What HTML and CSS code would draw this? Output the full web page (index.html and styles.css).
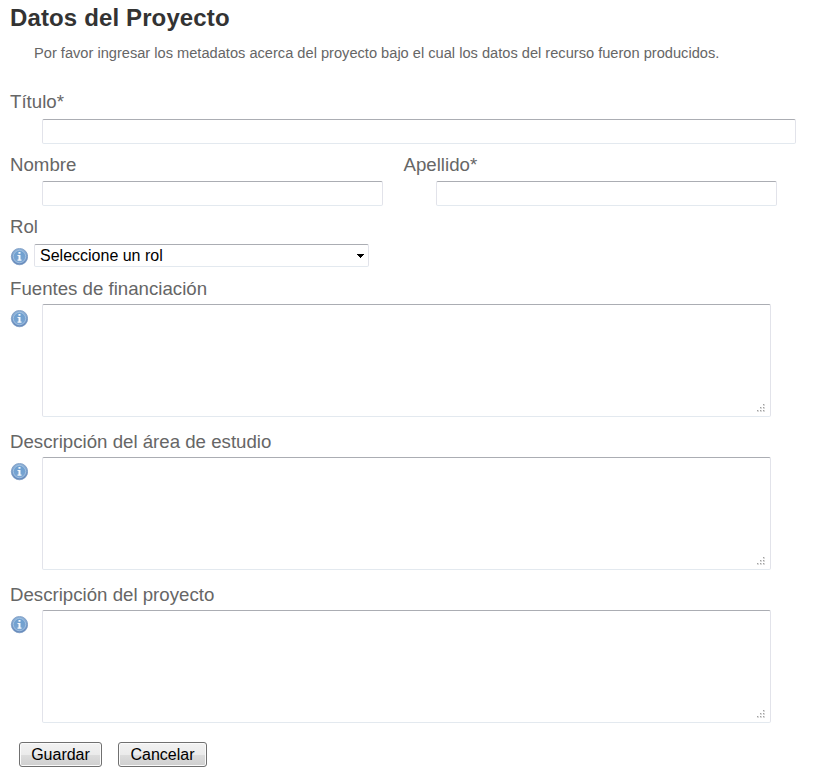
FILE: index.html
```
<!DOCTYPE html>
<html lang="es">
<head>
<meta charset="utf-8">
<title>Datos del Proyecto</title>
<link rel="stylesheet" href="styles.css">
</head>
<body>
<svg class="defs" width="0" height="0" aria-hidden="true">
  <defs>
    <linearGradient id="rim" x1="0" y1="0" x2="0" y2="1"><stop offset="0" stop-color="#8fb3d8"/><stop offset="1" stop-color="#6488bb"/></linearGradient>
    <linearGradient id="disc" x1="0" y1="0" x2="0" y2="1"><stop offset="0" stop-color="#6c9fd0"/><stop offset="1" stop-color="#7ba5d2"/></linearGradient>
  </defs>
  <symbol id="info" viewBox="0 0 18 18">
    <circle cx="9.5" cy="8.6" r="8.2" fill="url(#rim)" stroke="#7192bd" stroke-width=".7"/>
    <circle cx="9.5" cy="8.6" r="6.2" fill="url(#disc)" stroke="#a5c3e2" stroke-width=".9"/>
    <path d="M8.5 4h2v1.8h-2zM7.5 7h3v4.6h1v1.1h-4v-1.1h1V8.1h-1z" fill="#f4f8fc"/>
  </symbol>
  <symbol id="grip" viewBox="0 0 8 8">
    <path d="M6 0h2v2H6zM3 3h2v2H3zM6 3h2v2H6zM0 6h2v2H0zM3 6h2v2H3zM6 6h2v2H6z" fill="#dadada"/>
    <path d="M6 0h1v1H6zM3 3h1v1H3zM6 3h1v1H6zM0 6h1v1H0zM3 6h1v1H3zM6 6h1v1H6z" fill="#a0a0a0"/>
  </symbol>
</svg>
<form class="project">
  <h1 class="title">Datos del Proyecto</h1>
  <p class="intro">Por favor ingresar los metadatos acerca del proyecto bajo el cual los datos del recurso fueron producidos.</p>

  <div class="field">
    <label class="label" for="titulo">Título*</label>
    <input class="control text wide" id="titulo" type="text">
  </div>

  <div class="names">
    <div class="field">
      <label class="label" for="nombre">Nombre</label>
      <input class="control text" id="nombre" type="text">
    </div>
    <div class="field">
      <label class="label" for="apellido">Apellido*</label>
      <input class="control text" id="apellido" type="text">
    </div>
  </div>

  <div class="field role">
    <label class="label">Rol</label>
    <div class="row">
      <svg class="info"><use href="#info"/></svg>
      <div class="control select" role="combobox" tabindex="0"><span class="value">Seleccione un rol</span><svg class="arrow" viewBox="0 0 7 4" shape-rendering="crispEdges"><path d="M0 0h7v1H6v1H5v1H4v1H3V3H2V2H1V1H0z"/></svg></div>
    </div>
  </div>

  <div class="field area">
    <label class="label" for="fuentes">Fuentes de financiación</label>
    <div class="row">
      <svg class="info"><use href="#info"/></svg>
      <div class="box"><textarea class="control" id="fuentes"></textarea><svg class="grip"><use href="#grip"/></svg></div>
    </div>
  </div>

  <div class="field area">
    <label class="label" for="estudio">Descripción del área de estudio</label>
    <div class="row">
      <svg class="info"><use href="#info"/></svg>
      <div class="box"><textarea class="control" id="estudio"></textarea><svg class="grip"><use href="#grip"/></svg></div>
    </div>
  </div>

  <div class="field area">
    <label class="label" for="descripcion">Descripción del proyecto</label>
    <div class="row">
      <svg class="info"><use href="#info"/></svg>
      <div class="box"><textarea class="control" id="descripcion"></textarea><svg class="grip"><use href="#grip"/></svg></div>
    </div>
  </div>

  <div class="actions">
    <button class="button save" type="button">Guardar</button>
    <button class="button cancel" type="button">Cancelar</button>
  </div>
</form>
</body>
</html>
```
FILE: styles.css
```
* { box-sizing: border-box; }
body {
  margin: 0;
  background: #fff;
  color: #666;
  font-family: "Liberation Sans", Arial, sans-serif;
  overflow: hidden;
}
.defs { position: absolute; }
.project { padding: 4px 10px 0; }
.title {
  margin: 0;
  font-size: 24px;
  line-height: 28px;
  font-weight: bold;
  letter-spacing: 0.13px;
  color: #333;
  white-space: nowrap;
}
.intro {
  margin: 11px 0 28px 24px;
  font-size: 14.64px;
  line-height: 20px;
  height: 20px;
  white-space: nowrap;
}
.label {
  display: block;
  height: 22px;
  font-size: 18.67px;
  line-height: 22px;
  white-space: nowrap;
}
.control {
  display: block;
  margin: 0;
  padding: 0 4px;
  border: 1px solid;
  border-color: #abadb3 #e2e3ea #e3e9ef #e2e3ea;
  border-radius: 2px;
  background: #fff;
  color: #000;
  font: 16px "Liberation Sans", Arial, sans-serif;
  outline: none;
}
.text { width: 341px; height: 25px; margin: 5px 0 0 32px; }
.wide { width: 754px; margin-top: 6px; }
.names { display: flex; gap: 20.5px; margin-top: 10px; }
.role { margin-top: 10px; }
.row { display: flex; align-items: flex-start; }
.info { flex: none; width: 18px; height: 18px; margin-top: 4px; }
.role .row { margin-top: 6px; }
.select {
  display: flex;
  align-items: center;
  justify-content: space-between;
  width: 335px;
  height: 23px;
  margin-left: 6px;
  padding-left: 5px;
  line-height: 21px;
}
.arrow { width: 7px; height: 4px; }
.area { margin-top: 14px; }
.role + .area { margin-top: 11px; }
.area .row { margin-top: 4px; }
.area .info { margin-top: 6px; }
.box { position: relative; margin-left: 14px; }
.box textarea { width: 729px; height: 113px; resize: none; }
.grip { position: absolute; right: 6px; bottom: 5px; width: 8px; height: 8px; }
.actions { display: flex; gap: 16px; margin: 19px 0 0 9px; }
.button {
  height: 25px;
  padding: 0;
  border: 1px solid #707070;
  border-radius: 3px;
  background: linear-gradient(#f2f2f2 0, #ebebeb 50%, #dddddd 50%, #cfcfcf 100%);
  box-shadow: inset 0 0 0 1px #fbfbfb;
  color: #000;
  font: 16px/23px "Liberation Sans", Arial, sans-serif;
}
.save { width: 83px; }
.cancel { width: 89px; }
```
